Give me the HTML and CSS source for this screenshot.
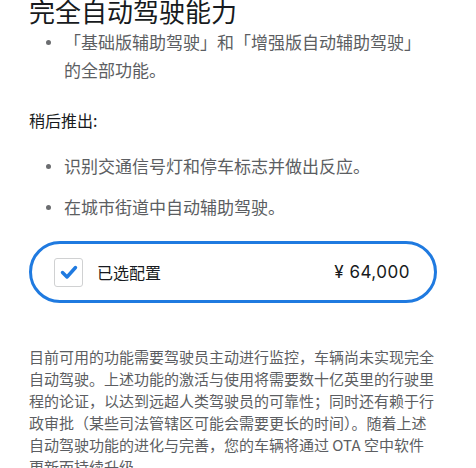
FILE: index.html
```html
<!DOCTYPE html>
<html lang="zh-CN">
<head>
<meta charset="utf-8">
<link rel="stylesheet" href="styles.css">
</head>
<body>
<div class="page">
  <h1 class="title">完全自动驾驶能力</h1>
  <ul class="features first">
    <li>「基础版辅助驾驶」和「增强版自动辅助驾驶」的全部功能。</li>
  </ul>
  <p class="later">稍后推出:</p>
  <ul class="features second">
    <li>识别交通信号灯和停车标志并做出反应。</li>
    <li>在城市街道中自动辅助驾驶。</li>
  </ul>
  <div class="option">
    <span class="check">
      <svg viewBox="0 0 20 20" width="20" height="20"><path d="M3.5 10.5 L8 15 L16.5 5.5" fill="none" stroke="#1f7ae0" stroke-width="3.4" stroke-linecap="round" stroke-linejoin="round"/></svg>
    </span>
    <span class="label">已选配置</span>
    <span class="price">¥ 64,000</span>
  </div>
  <p class="note">目前可用的功能需要驾驶员主动进行监控，车辆尚未实现完全自动驾驶。上述功能的激活与使用将需要数十亿英里的行驶里程的论证，以达到远超人类驾驶员的可靠性；同时还有赖于行政审批（某些司法管辖区可能会需要更长的时间）。随着上述自动驾驶功能的进化与完善，您的车辆将通过 OTA 空中软件更新而持续升级。</p>
</div>
</body>
</html>
```
FILE: styles.css
```css
html, body {
  margin: 0;
  padding: 0;
  background: #ffffff;
}
body {
  font-family: "Noto Sans CJK SC", "Noto Sans", sans-serif;
  overflow: hidden;
}
.page {
  padding: 0 39px 0 29px;
  width: 408px;
}
.title {
  margin: -4px 0 0 0;
  font-size: 26px;
  line-height: 30px;
  font-weight: 400;
  color: #171a20;
}
.features {
  list-style: none;
  margin: 0;
  padding: 0 0 0 35px;
  font-size: 17px;
  line-height: 28px;
  color: #5c5e62;
}
.features li {
  position: relative;
}
.features li::before {
  content: "";
  position: absolute;
  left: -18px;
  top: 12px;
  width: 5px;
  height: 5px;
  border-radius: 50%;
  background: #6b6d70;
}
.first {
  margin-top: 2px;
}
.second {
  margin-top: 20px;
  display: flex;
  flex-direction: column;
  gap: 13px;
}
.later {
  margin: 24px 0 0 0;
  font-size: 16px;
  line-height: 24px;
  color: #171a20;
}
.option {
  margin-top: 20px;
  height: 56px;
  border: 3px solid #1f7ae0;
  border-radius: 31px;
  display: flex;
  align-items: center;
  padding: 0 24px 0 22px;
}
.check {
  width: 27px;
  height: 27px;
  border: 1px solid #d0d1d2;
  border-radius: 3px;
  display: flex;
  align-items: center;
  justify-content: center;
  box-sizing: content-box;
}
.label {
  margin-left: 14px;
  font-size: 16px;
  color: #171a20;
  flex: 1;
}
.price {
  font-family: "Inter", "Noto Sans CJK SC", sans-serif;
  font-size: 17px;
  letter-spacing: 0.5px;
  color: #171a20;
}
.note {
  margin: 43px 0 0 0;
  font-size: 15px;
  line-height: 22px;
  color: #5c5e62;
}
```
